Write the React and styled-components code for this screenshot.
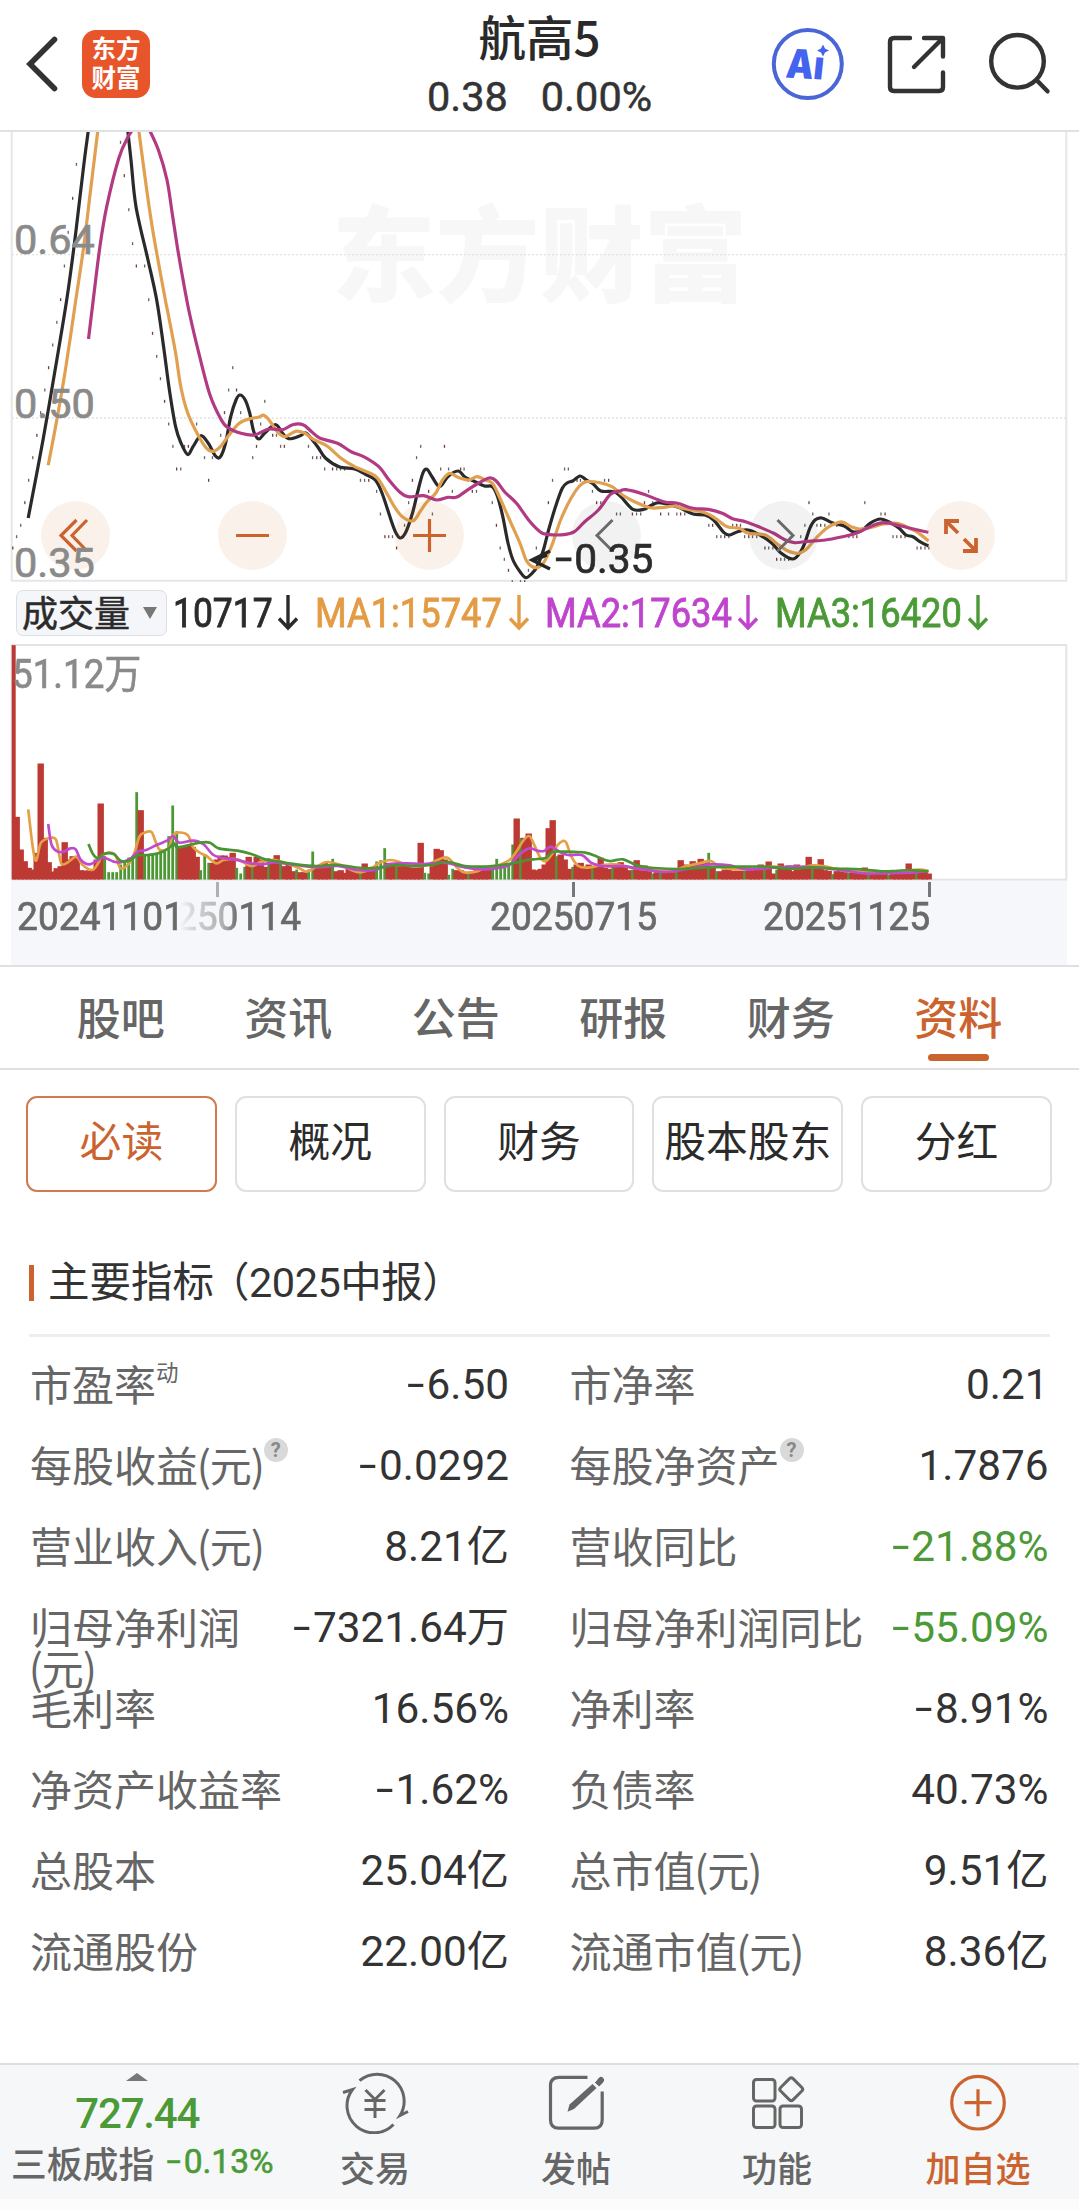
import React from "react";
import styled, { createGlobalStyle } from "styled-components";

const CJK = '"Noto Sans CJK SC", sans-serif';
const NUM = 'Roboto, "Noto Sans CJK SC", sans-serif';
const ORANGE = "#cb632f";
const GREEN = "#4b9a37";

const Global = createGlobalStyle`
  * { box-sizing: border-box; }
  body { margin: 0; background: #fff; }
`;

const Page = styled.div`
  width: 1079px;
  height: 2210px;
  overflow: hidden;
  display: flex;
  flex-direction: column;
  background: #fff;
  font-family: ${CJK};
  color: #333;
`;

/* ---------- header ---------- */
const Header = styled.header`
  height: 132px;
  flex: none;
  display: grid;
  grid-template-columns: 360px 1fr 360px;
  border-bottom: 2px solid #dfe2e3;
`;
const HeaderLeft = styled.div`
  display: flex;
  align-items: flex-start;
  padding: 30px 0 0 22px;
  gap: 20px;
`;
const Logo = styled.div`
  width: 68px;
  height: 68px;
  border-radius: 14px;
  background: #e9552a;
  color: #fff;
  font-weight: 700;
  font-size: 24.5px;
  line-height: 29px;
  text-align: center;
  padding-top: 3px;
`;
const Titles = styled.div`
  display: flex;
  flex-direction: column;
  align-items: center;
`;
const Title = styled.h1`
  margin: 7px 0 0;
  font-size: 47.5px;
  line-height: 58px;
  font-weight: 500;
  color: #2a2a2a;
  font-family: ${CJK};
`;
const Quote = styled.div`
  display: flex;
  gap: 33px;
  margin-top: 7px;
  font: 400 41.5px/50px ${NUM};
  -webkit-text-stroke: 0.5px #333;
`;
const HeaderIcons = styled.div`
  display: flex;
  padding: 26px 0 0 50px;
  gap: 37px;
  svg + svg + svg { margin-left: 2px; }
`;

/* ---------- charts ---------- */
const ChartPanel = styled.section`
  position: relative;
  height: ${(p) => p.$h}px;
  flex: none;
`;
const ChartSvg = styled.svg`
  display: block;
  position: relative;
`;
const Watermark = styled.div`
  position: absolute;
  left: 0;
  right: 0;
  top: 42px;
  text-align: center;
  font-size: 104px;
  line-height: 150px;
  font-weight: 900;
  color: #f7f7f7;
`;
const AxisLabel = styled.span`
  position: absolute;
  z-index: 2;
  left: ${(p) => p.$x}px;
  top: ${(p) => p.$y}px;
  font: 400 ${(p) => p.$size || 41.5}px/40px ${NUM};
  color: ${(p) => p.$color || "#8a8a8a"};
  -webkit-text-stroke: 0.7px currentColor;
  white-space: nowrap;
  transform: scaleX(${(p) => p.$sx || 1});
  transform-origin: 0 50%;
`;
const Controls = styled.div`
  position: absolute;
  left: 41px;
  top: 369px;
  display: flex;
  gap: 108px;
`;
const RoundButton = styled.button`
  width: 69px;
  height: 69px;
  padding: 0;
  border: 0;
  border-radius: 50%;
  background: ${(p) => (p.$muted ? "rgba(0,0,0,.05)" : "rgba(207,96,38,.09)")};
  color: ${(p) => (p.$muted ? "#6b6b6b" : ORANGE)};
  svg { display: block; }
`;
const Indicators = styled.div`
  height: 62px;
  flex: none;
  display: flex;
  align-items: center;
  padding: 0 0 0 16px;
`;
const Picker = styled.div`
  width: 151px;
  height: 46px;
  border: 1.5px solid #dcdfe3;
  border-radius: 7px;
  background: #f5f6f9;
  display: flex;
  align-items: center;
  gap: 13px;
  padding-left: 5px;
  font-size: 36px;
  line-height: 40px;
  color: #2b2b2b;
  span { margin-top: -4px; -webkit-text-stroke: 0.5px #2b2b2b; }
  margin-right: 6px;
`;
const Indicator = styled.div`
  display: flex;
  align-items: center;
  width: ${(p) => p.$w}px;
  color: ${(p) => p.$color};
  font: 400 41px/44px ${NUM};
  -webkit-text-stroke: 0.9px currentColor;
`;
const Squeeze = styled.span`
  width: ${(p) => p.$w}px;
  white-space: nowrap;
  transform: scaleX(${(p) => p.$sx});
  transform-origin: 0 50%;
`;
const DateAxis = styled.div`
  position: relative;
  flex: none;
  height: 84px;
  margin: 0 12px 0 11px;
  background: #f6f7fa;
`;
const Tick = styled.i`
  position: absolute;
  top: 1px;
  left: ${(p) => p.$x}px;
  width: 3px;
  height: 15px;
  background: ${(p) => p.$c || "#777"};
`;
const DateLabel = styled.span`
  position: absolute;
  top: 17px;
  left: ${(p) => p.$x}px;
  font: 400 38.5px/38px ${NUM};
  color: #6a6a6a;
  -webkit-text-stroke: 0.7px #6a6a6a;
  transform: scaleX(.965);
  transform-origin: 0 50%;
`;
const FadedDate = styled(DateLabel)`
  mask-image: linear-gradient(90deg, transparent 48px, rgba(0,0,0,.25) 62px, rgba(0,0,0,.5) 92px, #000 108px);
`;

/* ---------- tabs ---------- */
const Tabs = styled.nav`
  height: 105px;
  flex: none;
  display: flex;
  padding: 0 37px;
  border-top: 2px solid #dfe0e2;
  border-bottom: 2px solid #dfe0e2;
`;
const Tab = styled.div`
  flex: 1;
  display: flex;
  flex-direction: column;
  align-items: center;
  font-size: 44px;
  line-height: 60px;
  font-weight: 500;
  color: ${(p) => (p.$active ? ORANGE : "#666")};
  padding-top: 19px;
  &::after {
    content: "";
    width: 61px;
    height: 7px;
    border-radius: 4px;
    margin-top: 8px;
    background: ${(p) => (p.$active ? ORANGE : "transparent")};
  }
`;
const Chips = styled.div`
  flex: none;
  display: grid;
  grid-template-columns: repeat(5, 1fr);
  gap: 18px;
  padding: 26px 27px 0 26px;
`;
const Chip = styled.div`
  height: 96px;
  border: 2px solid ${(p) => (p.$active ? "#d07a4e" : "#dde1e1")};
  border-radius: 11px;
  display: flex;
  align-items: center;
  justify-content: center;
  padding-bottom: 10px;
  font-size: 41.8px;
  white-space: nowrap;
  color: ${(p) => (p.$active ? ORANGE : "#2b2b2b")};
`;

/* ---------- metrics ---------- */
const SectionTitle = styled.h2`
  margin: 52px 29px 0;
  height: 93px;
  flex: none;
  display: flex;
  align-items: flex-start;
  padding-top: 21px;
  border-bottom: 3px solid #eee;
  font-size: 41.5px;
  font-weight: 400;
  line-height: 36px;
  font-family: ${NUM};
  white-space: nowrap;
  &::before {
    content: "";
    width: 5px;
    height: 36px;
    margin-right: 14px;
    background: ${ORANGE};
  }
`;
const Period = styled.span`
  margin-left: -6px;
  letter-spacing: -.5px;
`;
const Metrics = styled.div`
  flex: 1;
  display: grid;
  grid-template-columns: 479px 479px;
  column-gap: 60.5px;
  grid-auto-rows: 81px;
  padding: 8px 0 0 30px;
`;
const Metric = styled.div`
  display: flex;
  justify-content: space-between;
  padding-top: 17px;
`;
const Label = styled.div`
  display: flex;
  font-size: 42px;
  line-height: 41px;
  color: #666;
  white-space: pre;
`;
const Paren = styled.span`
  margin: 0 -1.2px;
`;
const Sup = styled.sup`
  font-size: 22.5px;
  line-height: 24px;
  margin: -3px 0 0 0;
`;
const Help = styled.span`
  width: 24px;
  height: 24px;
  margin: -5px 0 0 0;
  border-radius: 50%;
  background: #d9d9d9;
  color: #888;
  font: 700 20px/24px ${NUM};
  text-align: center;
`;
const Value = styled.div`
  font: 400 42.3px/46px ${NUM};
  color: ${(p) => (p.$down ? GREEN : "#333")};
  white-space: nowrap;
`;
const Minus = styled.span`
  display: inline-block;
  transform: translateY(-1px) scaleX(1.5);
  margin-right: 5px;
`;

/* ---------- bottom bar ---------- */
const BottomBar = styled.footer`
  flex: none;
  height: 136px;
  display: grid;
  grid-template-columns: 274.500px repeat(4, 201px);
  background: #f6f7f9;
  border-top: 2px solid #dcdfe1;
`;
const BottomGap = styled.div`
  flex: none;
  height: 11px;
  background: #fcfcfc;
`;
const Index = styled.div`
  display: flex;
  flex-direction: column;
  align-items: center;
`;
const IndexArrow = styled.svg`
  margin-top: 8px;
  flex: none;
`;
const IndexValue = styled.div`
  font: 500 42px/44px ${NUM};
  color: ${GREEN};
  margin-top: 11px;
  letter-spacing: -1.2px;
`;
const IndexRow = styled.div`
  align-self: stretch;
  display: flex;
  align-items: center;
  justify-content: space-between;
  padding: 0 1px 0 11px;
  font-size: 35.8px;
  line-height: 44px;
  font-weight: 500;
  color: #666;
  margin-top: 4px;
  white-space: nowrap;
`;
const IndexChange = styled.span`
  font: 400 33.5px/44px ${NUM};
  color: ${GREEN};
  -webkit-text-stroke: .6px ${GREEN};
`;
const Action = styled.div`
  display: flex;
  flex-direction: column;
  align-items: center;
  padding-top: 5px;
  font-size: 35px;
  line-height: 44px;
  font-weight: 500;
  color: ${(p) => (p.$accent ? ORANGE : "#666")};
  svg { margin-bottom: 11px; flex: none; }
`;

/* ---------- chart data ---------- */
const BLACK = [
  [[28.2,518],[43,440],[56.8,360],[67,298],[74,246.7],[80,196.7],[84.4,160],[88.5,129]],
  [[127.6,129],[131,160],[136,206.7],[148,260],[156.7,300],[163.6,346.7],[169.4,390],[175.6,426.7],[181,443],[187.7,454.5],[193,446.7],[200.8,435.7],[208.3,443.3],[215.5,456],[220.4,456.7],[225.6,443],[230.7,416.7],[236,400],[240,395],[245.2,400],[249.7,413],[253.8,431.7],[259,439],[265,432.7],[275.5,424.7],[282.4,433],[288.6,438.7],[299.6,436],[305.8,433],[311.6,439],[318.5,448],[325.4,458],[339,466.7],[354.7,469],[365,474],[375.3,480],[382,493],[391,520],[396,533],[400.5,538],[406,531.7],[412.5,513],[417.4,493],[422.9,473],[427,469.3],[432,476.7],[439.7,486.7],[447.7,476.7],[458,471],[465,477],[475,481.7],[484.5,486],[492.4,486.7],[497.6,496.7],[502.8,516.7],[508,543],[513,560],[520,571.7],[525.8,577.7],[532,573.3],[537,566.7],[543.4,550],[548.6,530],[555.5,506.7],[562.3,488.3],[567.5,482.7],[572.7,481],[580,476],[586.4,480],[593.3,484],[600.8,491],[614,491.7],[620.8,496.7],[632.8,509.3],[644,509.3],[650,506],[658.6,502.7],[670.6,505],[681,508.3],[693,514],[705,515],[713.6,520],[724,532.7],[729.8,535],[737.7,531.7],[748,530],[760,535],[772,543.3],[780.6,552.7],[792.7,559],[799.5,553.3],[804.7,543.3],[809.8,528.3],[815,520],[821.9,518],[832.2,522.7],[844.2,526],[852.8,531.7],[861.4,530.7],[870,523.3],[880.3,519],[890.6,522.7],[899.2,528.3],[906,535],[913,536.7],[919.9,541.7],[928.4,546]],
];
const AMBER = [
  [[48.2,465.3],[56.8,420],[65.4,370],[75.8,300],[83.7,246.7],[90.2,193.3],[98,129]],
  [[138.6,129],[146.3,186.7],[153.2,233],[164.6,296],[168.7,316.7],[175.6,353],[180.8,386.7],[187.7,413],[198,435],[206.6,448.3],[213.5,451.3],[220.4,446.7],[229,435],[239.3,423.3],[249.7,418.7],[258.3,417.3],[264,415.3],[270.3,421.7],[277.2,431.7],[285,436.7],[295.5,431.3],[304.8,433.3],[313.4,439.3],[327,446],[341,458.3],[354.7,466.7],[375.3,476],[384,488.3],[394.3,506.7],[403,517.3],[413.2,520.7],[420,511.7],[427,501.7],[435.6,493.3],[442.5,480],[449.4,473.3],[458,477.3],[468.3,480],[477,476.7],[485.5,480],[492.4,483.3],[499.3,496.7],[509.6,520],[520,543.3],[527,561.7],[535.5,567.7],[543.4,563],[552,545],[560.6,520],[571,498.3],[579.5,486],[586.4,481.7],[600,482.7],[612,486.7],[622.5,495],[634.5,501.7],[650,507.7],[663.8,507.3],[674,506],[684.4,508.7],[705,512.7],[715.3,518.3],[727.4,526.7],[739.4,528.3],[748,533.3],[765.2,535],[777.2,544],[787.5,550.7],[797.8,553.3],[806.4,549.3],[815,539.3],[825.3,529.3],[834,524],[842.5,522],[851,526.7],[859.7,529],[871.7,527.3],[883.8,524],[897.5,523.3],[909.5,528.3],[918,532.7],[928.4,541]],
];
const MAGENTA = [
  [[88.5,339],[93,302],[99.9,246.7],[106.7,206.7],[118.8,158.3],[128,137],[134,128]],
  [[148.5,128],[158.4,150],[167,180],[172.2,213.3],[177.3,246.7],[182.5,276.7],[189.4,313],[199.7,356.7],[210,395],[220.4,418.3],[227.3,427.3],[241,433.3],[254.8,435],[268.6,429],[282.4,429.7],[292.7,424.7],[303,424.7],[311.6,431.7],[320.2,438.3],[337.5,443.3],[351.2,451.7],[365,457.3],[378.8,466.7],[389,480],[399.4,491.7],[408,496.7],[423.6,495.7],[436.6,500],[447.7,497.3],[456.3,497.3],[466.6,490.7],[477,484],[489,478],[496,480.7],[504.5,491.7],[516.5,503.3],[528.6,520],[540,531.7],[546.9,534.3],[564,534.7],[574.4,531.7],[584.7,521.7],[598.4,510],[610.5,494.3],[620.8,490.7],[626,489.7],[643,494],[663.8,501.7],[677.5,503.3],[693,508.3],[708.4,509.3],[722.2,513.3],[732.5,518.7],[746.3,522],[760,527.3],[773.8,533.3],[784,539.3],[794.4,542.7],[808,541.3],[825.3,540],[842.5,536.7],[856.3,533.3],[870,526.7],[883.8,522.7],[901,526],[914.7,529.3],[928.4,532.3]],
];
// Closing-price marks, in chart units.
const MARKS = [37,804,48,770,60,736,72,668,83,601,95,533,107,466,118,398,130,330,141,263,153,195,165,127,176,59,187,-42,198,-143,211,-245,222,-347,350,-413,361,-313,374,-211,385,-109,396,-42,420,-42,432,59,443,160,455,229,466,296,478,364,490,432,502,499,513,567,525,567,536,499,547,499,571,432,594,533,606,601,617,533,641,466,652,398,664,330,676,263,687,330,699,398,734,533,745,499,757,432,769,364,792,466,803,466,815,499,826,499,896,499,908,533,920,533,931,533,943,567,966,567,978,567,989,567,1001,567,1047,601,1059,601,1071,601,1094,634,1105,702,1118,770,1129,770,1140,770,1152,804,1175,736,1187,668,1198,601,1210,533,1222,499,1245,634,1256,702,1280,567,1291,499,1303,567,1314,634,1338,567,1348,567,1360,601,1372,634,1384,634,1430,668,1442,736,1453,804,1465,838,1477,871,1488,905,1512,905,1524,905,1535,871,1558,804,1593,668,1605,601,1617,668,1628,634,1640,567,1651,567,1676,601,1686,601,1721,634,1733,668,1745,668,1756,601,1768,601,1791,702,1802,702,1837,702,1849,702,1861,702,1872,668,1884,634,1896,668,1919,702,1942,702,1966,702,1977,702,1989,702,2059,736,2070,736,2082,770,2094,770,2105,770,2117,770,2128,736,2140,736,2151,736,2163,770,2175,770,2186,770,2198,770,2222,804,2233,804,2245,804,2256,838,2268,838,2279,838,2291,838,2326,770,2338,736,2350,668,2361,702,2373,736,2384,736,2396,736,2408,702,2431,736,2466,770,2478,770,2489,770,2512,668,2559,702,2571,702,2594,770,2605,770,2617,770,2629,770,2664,804,2675,804,2687,804,2698,804];
// Volume bars: positive closes up, negative closes down.
const BARS = [703,188,90,55,35,30,80,348,125,52,24,34,40,112,60,70,70,28,27,27,27,60,228,-70,-22,-22,-22,-45,-52,-66,-70,-262,208,-75,-72,-76,-78,-90,-85,-130,-222,-145,100,100,102,98,68,-28,-75,-50,50,60,72,72,68,80,-35,-18,-38,68,-45,68,60,38,-64,50,73,-55,40,45,25,-30,22,22,-30,-84,38,38,50,40,-62,25,28,20,32,28,25,-30,48,35,38,-54,-58,-94,50,48,-40,40,42,42,40,45,110,-20,-18,40,92,88,60,-14,-32,28,28,22,-22,25,28,30,32,30,-40,-62,-42,-44,-45,-105,183,-125,125,138,30,28,32,45,154,178,-70,75,60,32,-38,45,50,38,45,-35,40,65,35,32,-38,40,52,40,28,-30,58,38,42,25,-18,22,-22,25,25,22,-28,58,45,40,55,45,62,50,-80,38,-25,25,30,30,26,26,26,-26,28,28,35,45,-40,54,18,-30,48,35,42,25,45,32,32,68,-38,35,61,28,26,-16,25,25,22,-20,22,22,22,36,-28,25,22,22,20,-14,18,20,25,25,48,25,-25,25,28,18];
const VOL_AMBER = [82,538,95,650,105,692,118,640,140,625,162,628,172,675,180,703,200,695,222,680,240,705,268,720,285,700,295,680,315,668,335,675,350,715,375,700,390,670,405,620,420,608,440,606,452,635,465,660,490,655,500,620,515,608,545,615,560,650,580,668,600,678,628,700,650,690,690,688,730,708,760,695,800,690,845,705,870,715,890,725,920,710,950,696,990,705,1010,715,1045,727,1080,715,1100,700,1135,690,1165,698,1200,710,1240,705,1270,690,1300,683,1330,715,1350,727,1385,724,1410,712,1440,708,1480,690,1500,665,1520,632,1537,618,1550,640,1568,680,1585,694,1605,670,1620,645,1635,633,1645,638,1660,680,1680,708,1705,713,1750,705,1790,703,1830,712,1870,718,1950,722,1990,710,2040,698,2065,693,2090,710,2140,718,2200,715,2250,710,2310,715,2360,706,2400,710,2450,722,2520,726,2570,728,2620,725,2670,719,2697,724];
const VOL_VIOLET = [140,582,150,645,168,665,185,665,205,655,220,658,235,690,260,703,285,690,300,682,330,695,350,697,380,685,400,665,425,660,455,645,485,632,503,618,520,638,560,632,590,642,620,675,650,685,680,688,720,698,760,703,800,697,860,705,920,712,980,708,1040,720,1090,720,1130,703,1180,700,1230,702,1290,698,1350,712,1400,718,1440,715,1480,705,1510,672,1538,655,1560,662,1580,663,1600,650,1625,665,1650,675,1690,675,1720,700,1760,709,1810,708,1850,715,1930,726,1990,718,2040,708,2065,703,2120,706,2170,718,2240,714,2300,710,2370,712,2440,720,2510,730,2560,730,2640,728,2697,723];
const VOL_GREEN = [257,642,270,672,285,685,300,672,330,672,350,692,375,692,400,676,430,675,460,670,490,655,505,640,515,652,550,645,580,638,610,638,635,655,690,662,730,672,770,688,810,695,860,703,920,708,980,705,1060,715,1110,712,1150,705,1200,708,1250,705,1300,696,1350,708,1400,710,1450,706,1500,698,1530,690,1560,687,1585,684,1605,666,1640,665,1700,668,1735,680,1770,693,1810,688,1850,706,1900,714,1980,717,2060,712,2150,710,2220,710,2300,716,2360,712,2430,716,2500,718,2560,724,2600,723,2640,720,2670,722,2697,724];

const UNIT_X = 2.905;
const pairs = (flat, top) => {
  const out = [];
  for (let i = 0; i < flat.length; i += 2) out.push([flat[i] / UNIT_X, top + flat[i + 1] / 3]);
  return out;
};
const smooth = (pts) => {
  let d = `M${pts[0][0]} ${pts[0][1]}`;
  for (let i = 0; i < pts.length - 1; i++) {
    const a = pts[i - 1] || pts[i];
    const b = pts[i];
    const c = pts[i + 1];
    const e = pts[i + 2] || c;
    d += `C${(b[0] + (c[0] - a[0]) / 6).toFixed(2)} ${(b[1] + (c[1] - a[1]) / 6).toFixed(2)} ${(c[0] - (e[0] - b[0]) / 6).toFixed(2)} ${(c[1] - (e[1] - b[1]) / 6).toFixed(2)} ${c[0].toFixed(2)} ${c[1].toFixed(2)}`;
  }
  return d;
};

function Curve({ parts, color, w = 3.2 }) {
  return parts.map((p, i) => (
    <path key={i} d={smooth(p)} fill="none" stroke={color} strokeWidth={w} strokeLinejoin="round" />
  ));
}

function PriceChart() {
  return (
    <ChartPanel $h={450}>
      <Watermark>东方财富</Watermark>
      <ChartSvg width="1079" height="450" viewBox="0 132 1079 450">
        <path d="M11.7 132V580.8H1066.3V132" fill="none" stroke="#e4e6e7" strokeWidth="2" />
        <path d="M12 254.7H1066M12 418H1066" stroke="#e2e2e2" strokeWidth="1.3" strokeDasharray="2 2" />
        {pairs(MARKS, 280).map(([x, y], i) => (
          <rect key={i} x={x - 0.6} y={y - 1.5} width="1.3" height="3" fill={i % 3 ? "#666" : "#7a3b35"} />
        ))}
        <Curve parts={BLACK} color="#2a2a2a" />
        <Curve parts={AMBER} color="#e0a050" />
        <Curve parts={MAGENTA} color="#b23a83" />
        <path d="M550 551L532 560L550 569M547 555L535 560" fill="none" stroke="#262626" strokeWidth="3.4" />
      </ChartSvg>
      <Controls>
        <RoundButton>
          <svg width="69" height="69" fill="none" stroke="currentColor" strokeWidth="3.2">
            <path d="M35.5 19L20 34.5L35.5 50M46 19L31 34.5L46 50" />
          </svg>
        </RoundButton>
        <RoundButton>
          <svg width="69" height="69" stroke="currentColor" strokeWidth="3.2"><path d="M18 34.5H51" /></svg>
        </RoundButton>
        <RoundButton>
          <svg width="69" height="69" stroke="currentColor" strokeWidth="3.2"><path d="M18 34.5H51M34.5 18V51" /></svg>
        </RoundButton>
        <RoundButton $muted>
          <svg width="69" height="69" fill="none" stroke="currentColor" strokeWidth="3"><path d="M40.5 19L25 34.5L40.5 50" /></svg>
        </RoundButton>
        <RoundButton $muted>
          <svg width="69" height="69" fill="none" stroke="currentColor" strokeWidth="3"><path d="M28.5 19L44 34.5L28.5 50" /></svg>
        </RoundButton>
        <RoundButton>
          <svg width="69" height="69" fill="none" stroke="currentColor" strokeWidth="3.8">
            <path d="M33 20H20V33M20 20L32 32M50 37V50H37M50 50L38 38" />
          </svg>
        </RoundButton>
      </Controls>
      <AxisLabel $x={14} $y={88}>0.64</AxisLabel>
      <AxisLabel $x={14} $y={252}>0.50</AxisLabel>
      <AxisLabel $x={14} $y={411}>0.35</AxisLabel>
      <AxisLabel $x={558} $y={407} $color="#2b2b2b" $sx={0.98}><Minus>-</Minus>0.35</AxisLabel>
    </ChartPanel>
  );
}

function DownArrow() {
  return (
    <svg width="20" height="36" fill="none" stroke="currentColor" strokeWidth="3.4">
      <path d="M10 0V33M1 23.5L10 33L19 23.5" />
    </svg>
  );
}

const INDICATORS = [
  { text: "10717", w: 142, tw: 105, color: "#2b2b2b", sx: 0.865 },
  { text: "MA1:15747", w: 229.5, tw: 193.5, color: "#e39c45", sx: 0.885 },
  { text: "MA2:17634", w: 230, tw: 193.5, color: "#bf45cd", sx: 0.885 },
  { text: "MA3:16420", w: 230, tw: 193.5, color: GREEN, sx: 0.885 },
];

function VolumeChart() {
  return (
    <ChartPanel $h={237}>
      <AxisLabel $x={12} $y={11} $size={40} $sx={0.92}>51.12万</AxisLabel>
      <ChartSvg width="1079" height="237" viewBox="0 644 1079 237">
        <rect x="11.7" y="645" width="1054.6" height="234.6" fill="none" stroke="#e2e4e5" strokeWidth="2" />
        {BARS.map((v, i) => {
          const h = Math.abs(v) / 3;
          const up = v > 0;
          const x = 12.7 + 4 * i;
          return up ? (
            <rect key={i} x={Math.max(11.7, x - 3.2)} y={879.5 - h} width={i ? 6.4 : 4} height={h} fill="#bd3a34" />
          ) : (
            <rect key={i} x={x - 1.4} y={879.5 - h} width="2.8" height={h} fill="#4d9836" />
          );
        })}
        <Curve parts={[pairs(VOL_AMBER, 630)]} color="#e59f45" w={2.7} />
        <Curve parts={[pairs(VOL_VIOLET, 630)]} color="#c04acb" w={2.7} />
        <Curve parts={[pairs(VOL_GREEN, 630)]} color="#4a9434" w={2.7} />
      </ChartSvg>
    </ChartPanel>
  );
}

function HeaderBar() {
  return (
    <Header>
      <HeaderLeft>
        <svg width="40" height="68" fill="none" stroke="#333" strokeWidth="5.6" strokeLinecap="round">
          <path d="M32.5 9.5L8 34L32.5 58.5" />
        </svg>
        <Logo>东方<br />财富</Logo>
      </HeaderLeft>
      <Titles>
        <Title>航高5</Title>
        <Quote><span>0.38</span><span>0.00%</span></Quote>
      </Titles>
      <HeaderIcons>
        <svg width="78" height="78">
          <circle cx="38.8" cy="38" r="34" fill="none" stroke="#4a66d6" strokeWidth="4" />
          <text x="0" y="0" transform="translate(16 51.5) rotate(3) skewX(-3) scale(.87 1)" fontFamily="Inter" fontWeight="900" fontSize="40" fill="#4463ee">Ai</text>
          <circle cx="54" cy="23.500" r="8" fill="#fff" />
          <path d="M54 18.500L56 22.500L60 24.500L56 26.500L54 30.500L52 26.500L48 24.500L52 22.500Z" fill="#4463ee" />
        </svg>
        <svg width="64" height="72" fill="none" stroke="#333" strokeWidth="4.4" strokeLinecap="round" strokeLinejoin="round">
          <path d="M26 12H10Q6 12 6 16V61Q6 65 10 65H55Q59 65 59 61V46.500M40 12H59V30.500M58 13L30 41" />
        </svg>
        <svg width="70" height="72" fill="none" stroke="#333" strokeWidth="4.4" strokeLinecap="round">
          <circle cx="30.5" cy="35.300" r="26.300" />
          <path d="M49.500 54L60.500 65.300" />
        </svg>
      </HeaderIcons>
    </Header>
  );
}

const ROWS = [
  [{ l: "市盈率", sup: "动", v: "-6.50" }, { l: "市净率", v: "0.21" }],
  [{ l: "每股收益(元)", help: 1, v: "-0.0292" }, { l: "每股净资产", help: 1, v: "1.7876" }],
  [{ l: "营业收入(元)", v: "8.21亿" }, { l: "营收同比", v: "-21.88%", down: 1 }],
  [{ l: "归母净利润\n(元)", v: "-7321.64万" }, { l: "归母净利润同比", v: "-55.09%", down: 1 }],
  [{ l: "毛利率", v: "16.56%" }, { l: "净利率", v: "-8.91%" }],
  [{ l: "净资产收益率", v: "-1.62%" }, { l: "负债率", v: "40.73%" }],
  [{ l: "总股本", v: "25.04亿" }, { l: "总市值(元)", v: "9.51亿" }],
  [{ l: "流通股份", v: "22.00亿" }, { l: "流通市值(元)", v: "8.36亿" }],
];

function Signed({ children }) {
  return children[0] === "-" ? <><Minus>-</Minus>{children.slice(1)}</> : children;
}

function LabelText({ children }) {
  return (
    <span>
      {children.split(/([()])/).map((s, i) => (s === "(" || s === ")" ? <Paren key={i}>{s}</Paren> : s))}
    </span>
  );
}

export default function App() {
  return (
    <Page>
      <Global />
      <HeaderBar />
      <PriceChart />
      <Indicators>
        <Picker>
          <span>成交量</span>
          <svg width="14" height="12" fill="#777"><path d="M0 0H14L7 12Z" /></svg>
        </Picker>
        {INDICATORS.map((t) => (
          <Indicator key={t.text} $w={t.w} $color={t.color}>
            <Squeeze $w={t.tw} $sx={t.sx}>{t.text}</Squeeze>
            <DownArrow />
          </Indicator>
        ))}
      </Indicators>
      <VolumeChart />
      <DateAxis>
        <Tick $x={204.500} $c="#b0b0b0" />
        <Tick $x={561} />
        <Tick $x={916.500} />
        <DateLabel $x={6}>20241101</DateLabel>
        <FadedDate $x={123}>20250114</FadedDate>
        <DateLabel $x={479}>20250715</DateLabel>
        <DateLabel $x={752}>20251125</DateLabel>
      </DateAxis>
      <Tabs>
        {["股吧", "资讯", "公告", "研报", "财务", "资料"].map((t) => (
          <Tab key={t} $active={t === "资料"}>{t}</Tab>
        ))}
      </Tabs>
      <Chips>
        {["必读", "概况", "财务", "股本股东", "分红"].map((t) => (
          <Chip key={t} $active={t === "必读"}>{t}</Chip>
        ))}
      </Chips>
      <SectionTitle>主要指标<Period>（2025中报）</Period></SectionTitle>
      <Metrics>
        {ROWS.flat().map((m) => (
          <Metric key={m.l}>
            <Label>
              <LabelText>{m.l}</LabelText>
              {m.sup && <Sup>{m.sup}</Sup>}
              {m.help && <Help>?</Help>}
            </Label>
            <Value $down={m.down}><Signed>{m.v}</Signed></Value>
          </Metric>
        ))}
      </Metrics>
      <BottomBar>
        <Index>
          <IndexArrow width="22" height="8" fill="#777"><path d="M0 8L11 0L22 8Z" /></IndexArrow>
          <IndexValue>727.44</IndexValue>
          <IndexRow>
            <span>三板成指</span>
            <IndexChange><Signed>-0.13%</Signed></IndexChange>
          </IndexRow>
        </Index>
        <Action>
          <svg width="68" height="64" fill="none" stroke="currentColor" strokeWidth="3">
            <path d="M18.500 10.700A27 27 0 0 1 59 45.500L67 41.500M52.500 54.500A27 27 0 0 1 11.500 19.500L2 22.500" />
            <path d="M24.500 20L34 29.500L43.500 20M23.500 30.500H44.500M23.500 39.500H44.500M34 29.500V48" />
          </svg>
          交易
        </Action>
        <Action>
          <svg width="60" height="64" fill="none" stroke="currentColor" strokeWidth="3.200">
            <path d="M41.500 7.300H13Q4.500 7.300 4.500 15.500V50Q4.500 58.200 13 58.200H48Q56.200 58.200 56.200 50V21.500" />
            <path d="M21.500 41.700L23.500 34.500L46.500 14L50.500 18L28 39Z" fill="currentColor" stroke="none" />
            <path d="M51 14.500L55 10.500" strokeWidth="6" />
            <path d="M54.500 10.500L55 10" strokeWidth="6" strokeLinecap="round" />
          </svg>
          发帖
        </Action>
        <Action>
          <svg width="60" height="64" fill="none" stroke="currentColor" strokeWidth="3">
            <rect x="6.500" y="9.500" width="21.500" height="21.500" rx="3" />
            <rect x="6.500" y="36" width="21.500" height="21.500" rx="3" />
            <rect x="33" y="36" width="21.500" height="21.500" rx="3" />
            <rect x="35.500" y="10.500" width="17.500" height="17.500" rx="2.500" transform="rotate(45 44.250 19.250)" />
          </svg>
          功能
        </Action>
        <Action $accent>
          <svg width="60" height="64" fill="none" stroke="currentColor" strokeWidth="3.200">
            <circle cx="30" cy="32.700" r="26.300" />
            <path d="M16.500 32.700H43.500M30 19.200V46.200" />
          </svg>
          加自选
        </Action>
      </BottomBar>
      <BottomGap />
    </Page>
  );
}
